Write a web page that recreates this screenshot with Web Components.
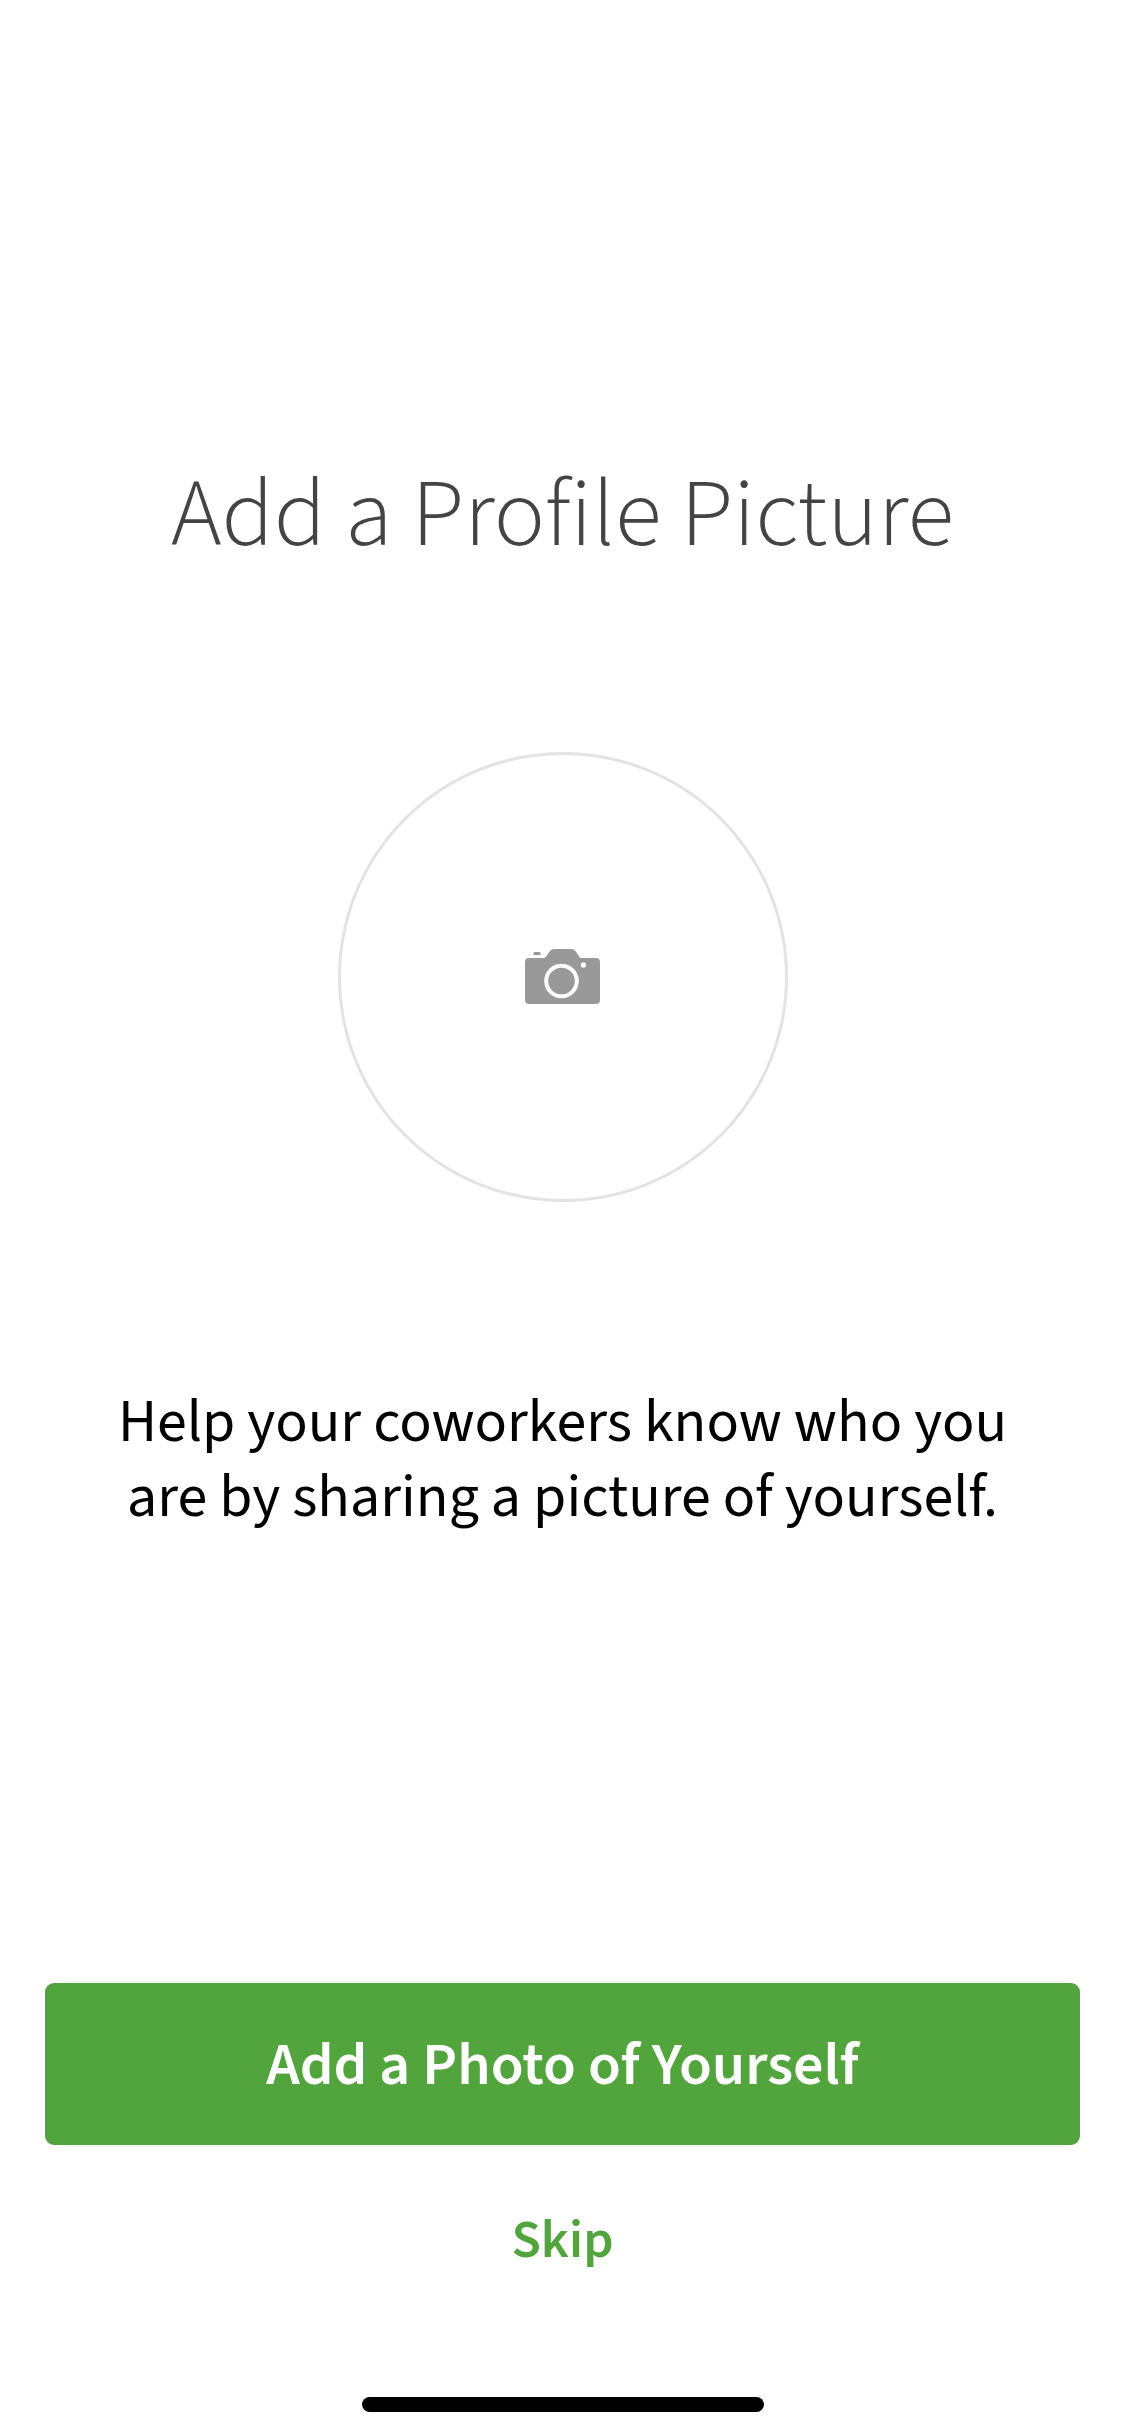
<!DOCTYPE html>
<html lang="en">
<head>
<meta charset="utf-8">
<meta name="viewport" content="width=device-width, initial-scale=1">
<title>Add a Profile Picture</title>
<style>
  body {
    margin: 0;
    background: #fff;
    color: #000;
    font-family: "Source Sans Pro", "Source Sans 3", "Noto Sans CJK SC", "Noto Sans", sans-serif;
    font-variant-ligatures: no-common-ligatures;
  }
</style>
</head>
<body>
<profile-screen>
  <screen-title slot="title">Add a Profile Picture</screen-title>
  <photo-picker></photo-picker>
  <help-text>Help your coworkers know who you are by sharing a picture of yourself.</help-text>
  <action-button slot="actions" kind="primary">Add a Photo of Yourself</action-button>
  <action-button slot="actions" kind="link">Skip</action-button>
</profile-screen>

<script>
  function define(name, html) {
    const template = document.createElement('template');
    template.innerHTML = html;
    customElements.define(name, class extends HTMLElement {
      constructor() {
        super();
        this.attachShadow({ mode: 'open' }).append(template.content.cloneNode(true));
      }
    });
  }

  define('screen-title', `
    <style>
      :host { display: block; }
      h1 { margin: 0; font-size: 96px; line-height: 120px; font-weight: 300; color: #444; text-align: center; }
    </style>
    <h1><slot></slot></h1>`);

  define('photo-picker', `
    <style>
      :host { display: flex; justify-content: center; }
      button {
        display: flex; align-items: center; justify-content: center;
        box-sizing: border-box; width: 450px; height: 450px; padding: 0;
        border: 3px solid #e3e3e3; border-radius: 50%;
        background: none; cursor: pointer;
      }
      svg { display: block; width: 75px; height: 56px; }
    </style>
    <button type="button" aria-label="Choose a photo">
      <svg viewBox="0 0 75 56" aria-hidden="true">
        <path fill="#999" d="M4 9H18.500Q20.500 9 21.500 7L24.500 2.500Q26 0 28.500 0H46.500Q49 0 50.500 2L54 7.500Q55 9 56.500 9H71Q75 9 75 13V51Q75 55 71 55H4Q0 55 0 51V13Q0 9 4 9Z"/>
        <path fill="#999" d="M9.500 3H14.500Q15.500 3 15.500 4V6H8.500V4Q8.500 3 9.500 3Z"/>
        <circle cx="36.500" cy="32" r="15.300" fill="none" stroke="#fff" stroke-width="4"/>
        <circle cx="58.500" cy="16" r="2.700" fill="#fff"/>
      </svg>
    </button>`);

  define('help-text', `
    <style>
      :host { display: block; padding: 0 96px; }
      p { margin: 0; font-size: 60px; line-height: 75px; text-align: center; }
    </style>
    <p><slot></slot></p>`);

  define('action-button', `
    <style>
      :host { display: block; }
      button {
        display: block; box-sizing: border-box; width: 100%; margin: 0; border: 0;
        font-family: inherit; font-weight: 600; text-align: center; cursor: pointer;
      }
      :host([kind="primary"]) button {
        padding: 41px 24px 37px; border-radius: 9px;
        background: #52a43d; color: #fff; font-size: 60px; line-height: 84px;
      }
      :host([kind="link"]) button {
        padding: 24px; background: none;
        color: #52a43d; font-size: 54px; line-height: 72px;
      }
    </style>
    <button type="button"><slot></slot></button>`);

  define('home-indicator', `
    <style>
      :host { display: flex; justify-content: center; padding-bottom: 24px; }
      div { width: 402px; height: 15px; border-radius: 8px; background: #000; }
    </style>
    <div></div>`);

  define('profile-screen', `
    <style>
      :host { display: flex; flex-direction: column; box-sizing: border-box; min-height: 100vh; }
      header { padding-top: 455px; }
      main { display: flex; flex-direction: column; gap: 183px; padding-top: 177px; }
      footer { display: flex; flex-direction: column; gap: 96px; margin-top: auto; }
      .actions { display: flex; flex-direction: column; gap: 36px; padding: 48px 45px 0; }
    </style>
    <header><slot name="title"></slot></header>
    <main><slot></slot></main>
    <footer>
      <div class="actions"><slot name="actions"></slot></div>
      <home-indicator></home-indicator>
    </footer>`);
</script>
</body>
</html>
